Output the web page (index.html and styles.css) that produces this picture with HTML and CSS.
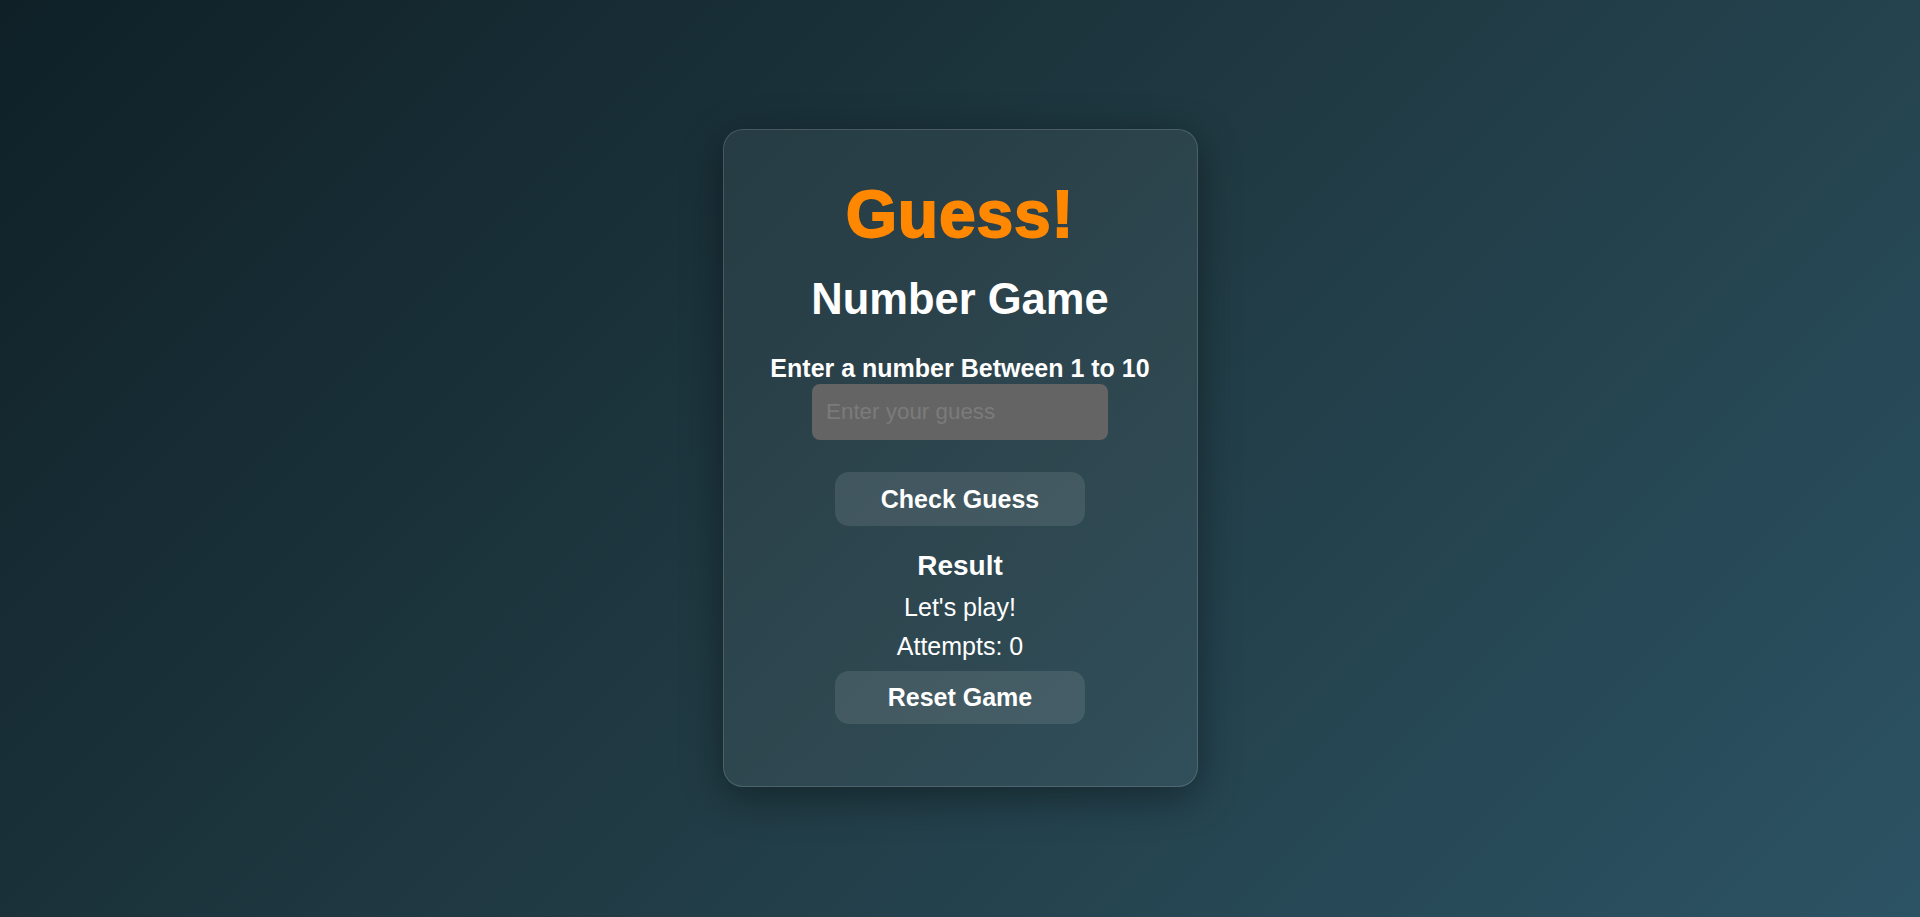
FILE: index.html
```html
<!DOCTYPE html>
<html lang="en">
<head>
<meta charset="UTF-8">
<title>Guess! Number Game</title>
<link rel="stylesheet" href="styles.css">
</head>
<body>
<main class="page">
  <section class="card">
    <h1 class="title">Guess!</h1>
    <h2 class="subtitle">Number Game</h2>
    <label class="label" for="guess">Enter a number Between 1 to 10</label>
    <input class="guess-input" id="guess" type="number" placeholder="Enter your guess">
    <button class="btn btn-check" type="button">Check Guess</button>
    <h3 class="result-title">Result</h3>
    <p class="result-text">Let's play!</p>
    <p class="result-text">Attempts: 0</p>
    <button class="btn btn-reset" type="button">Reset Game</button>
  </section>
</main>
</body>
</html>
```

FILE: styles.css
```css
* {
  box-sizing: border-box;
}

html, body {
  margin: 0;
  padding: 0;
  height: 100%;
}

body {
  font-family: "Liberation Sans", Arial, sans-serif;
  color: #ffffff;
  background: linear-gradient(135deg, #0f2027 0%, #203a43 50%, #2c5364 100%);
  min-height: 917px;
}

.page {
  display: flex;
  justify-content: center;
  padding-top: 129px;
}

.card {
  width: 475px;
  display: flex;
  flex-direction: column;
  align-items: center;
  padding: 44px 0 62px;
  border-radius: 20px;
  background: rgba(255, 255, 255, 0.06);
  border: 1px solid rgba(255, 255, 255, 0.15);
  box-shadow: 0 10px 40px rgba(0, 0, 0, 0.4);
}

.title {
  margin: 0;
  font-size: 66px;
  line-height: 80px;
  font-weight: 700;
  letter-spacing: 0.8px;
  color: #ff8800;
  -webkit-text-stroke: 1.8px #ff8800;
}

.subtitle {
  margin: 19px 0 0;
  font-size: 43.5px;
  line-height: 52px;
  font-weight: 700;
}

.label {
  margin-top: 28px;
  font-size: 25px;
  line-height: 30px;
  font-weight: 700;
}

.guess-input {
  margin-top: 1px;
  width: 296px;
  height: 56px;
  border: none;
  outline: none;
  border-radius: 8px;
  background: #646464;
  color: #ffffff;
  padding: 0 14px;
  font-family: "Liberation Sans", Arial, sans-serif;
  font-size: 22.4px;
  -moz-appearance: textfield;
}

.guess-input::-webkit-outer-spin-button,
.guess-input::-webkit-inner-spin-button {
  -webkit-appearance: none;
  margin: 0;
}

.guess-input::placeholder {
  color: #7b7b7b;
}

.btn {
  width: 250px;
  height: 54px;
  border: none;
  border-radius: 14px;
  background: rgba(255, 255, 255, 0.1);
  color: #ffffff;
  font-family: "Liberation Sans", Arial, sans-serif;
  font-size: 25px;
  font-weight: 700;
  cursor: pointer;
}

.btn-check {
  margin-top: 32px;
}

.result-title {
  margin: 23px 0 0;
  font-size: 28px;
  line-height: 34px;
  font-weight: 700;
}

.result-text {
  margin: 9px 0 0;
  font-size: 25px;
  line-height: 30px;
}

.btn-reset {
  margin-top: 10px;
  height: 53px;
}
```
